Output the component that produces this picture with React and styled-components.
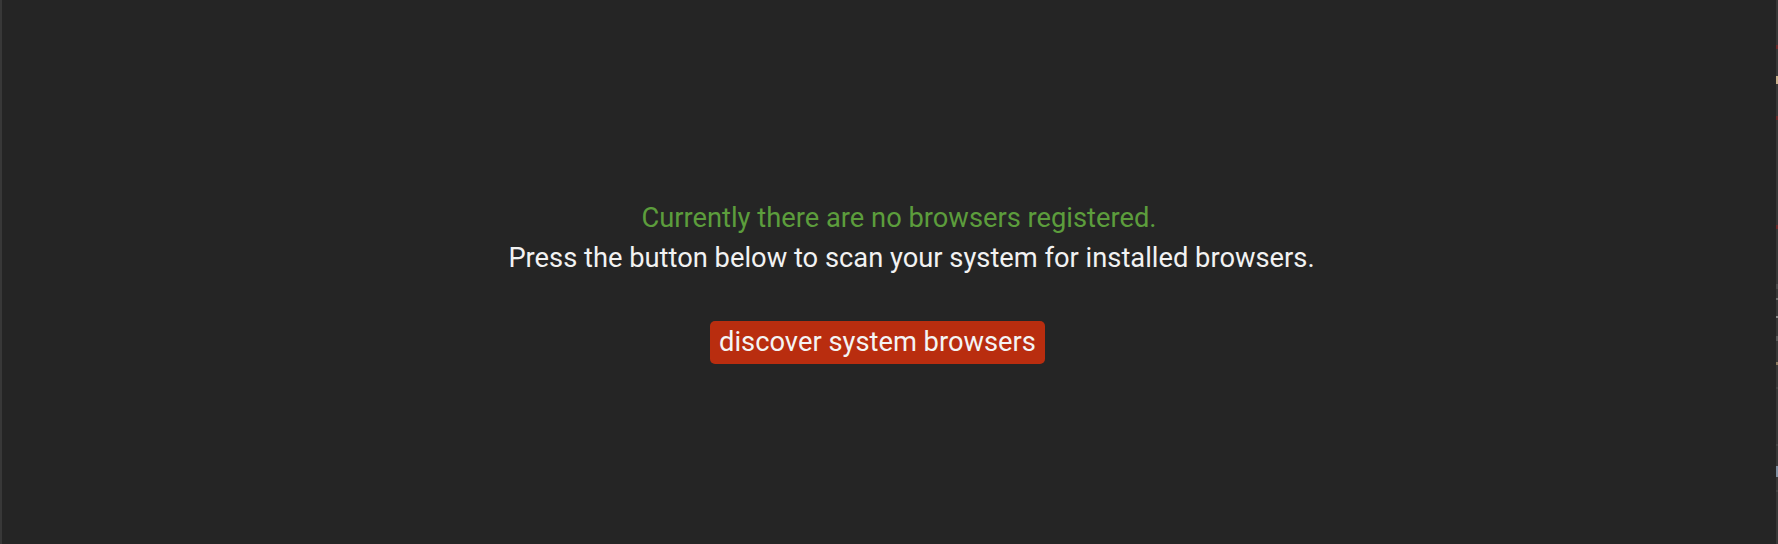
import React from 'react';
import styled, { createGlobalStyle } from 'styled-components';

const GlobalStyle = createGlobalStyle`
  html, body {
    margin: 0;
    padding: 0;
    background: #252525;
    font-family: Roboto, "Noto Sans", Arial, sans-serif;
  }
`;

const Frame = styled.div`
  display: flex;
  width: 100vw;
  height: 100vh;
  background: #252525;
  overflow: hidden;
`;

const EdgeStrip = styled.div`
  position: relative;
  width: 2px;
  flex: none;
  background: #383838;
`;

const RulerMark = styled.span`
  position: absolute;
  left: 0;
  width: 2px;
  background: ${({ $color }) => $color};
`;

const Content = styled.main`
  flex: 1;
  display: flex;
  flex-direction: column;
  align-items: center;
  justify-content: center;
  padding-top: 17px;
  box-sizing: border-box;
`;

const Line = styled.p`
  margin: 0;
  font-size: 27.3px;
  line-height: 40px;
  white-space: nowrap;
  color: ${({ $tone }) => ($tone === 'success' ? '#5c9d3c' : '#f2f2f2')};
  padding-left: ${({ $shift }) => $shift || 0}px;
`;

const DiscoverButton = styled.button`
  margin-top: 43px;
  margin-right: 23px;
  padding: 6px 9px;
  border: none;
  border-radius: 5px;
  background: #b92d0f;
  color: #f4f4f4;
  font-family: inherit;
  font-size: 27.3px;
  line-height: 31px;
  cursor: pointer;

  &:hover {
    background: #c9360f;
  }
`;

const rulerMarks = [
  { top: 45, height: 4, color: '#6b2b2b' },
  { top: 76, height: 8, color: '#c9b08c' },
  { top: 116, height: 4, color: '#6b2b2b' },
  { top: 225, height: 4, color: '#6b2b2b' },
  { top: 284, height: 5, color: '#4a4a4a' },
  { top: 298, height: 2, color: '#707070' },
  { top: 316, height: 2, color: '#8a8a8a' },
  { top: 336, height: 5, color: '#5a5a5a' },
  { top: 362, height: 3, color: '#8a7a60' },
  { top: 387, height: 2, color: '#444444' },
  { top: 444, height: 2, color: '#444444' },
  { top: 466, height: 11, color: '#7f8ea0' },
  { top: 490, height: 2, color: '#444444' },
];

export default function App() {
  return (
    <>
      <GlobalStyle />
      <Frame>
        <EdgeStrip />
        <Content>
          <Line $tone="success" $shift={20}>
            Currently there are no browsers registered.
          </Line>
          <Line $shift={45}>
            Press the button below to scan your system for installed browsers.
          </Line>
          <DiscoverButton type="button">discover system browsers</DiscoverButton>
        </Content>
        <EdgeStrip>
          {rulerMarks.map((m) => (
            <RulerMark
              key={m.top}
              $color={m.color}
              style={{ top: m.top, height: m.height }}
            />
          ))}
        </EdgeStrip>
      </Frame>
    </>
  );
}
